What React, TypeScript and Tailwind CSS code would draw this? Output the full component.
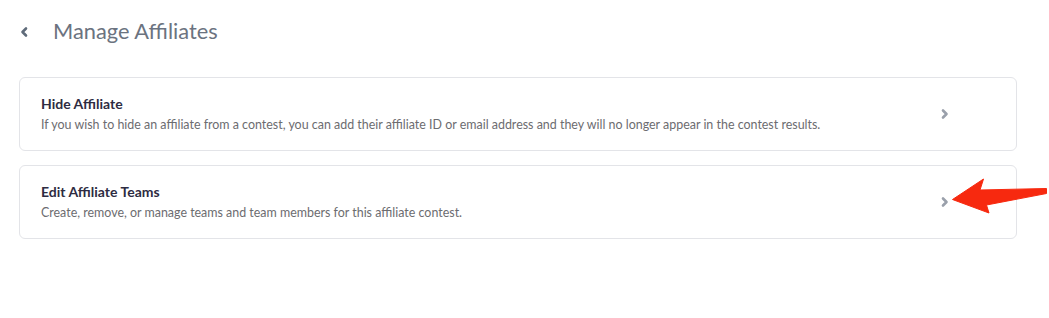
import React from "react";

const cards = [
  {
    title: "Hide Affiliate",
    text: "If you wish to hide an affiliate from a contest, you can add their affiliate ID or email address and they will no longer appear in the contest results.",
  },
  {
    title: "Edit Affiliate Teams",
    text: "Create, remove, or manage teams and team members for this affiliate contest.",
  },
];

function Chevron({ dir }: { dir: "left" | "right" }) {
  return (
    <svg width="10" height="12" viewBox="0 0 10 12" fill="none">
      <path
        d={dir === "left" ? "M7 2.5 L3.5 6 L7 9.5" : "M3 2.5 L6.5 6 L3 9.5"}
        stroke="currentColor"
        strokeWidth="2.6"
        strokeLinecap="round"
        strokeLinejoin="round"
      />
    </svg>
  );
}

export default function App() {
  return (
    <div className="relative min-h-[318px] w-[1049px] bg-white pl-[19px] pr-[32px] pt-[16px] font-['Lato','Noto_Sans',sans-serif]">
      <div className="flex h-[30px] items-center">
        <span className="flex w-[34px] pt-[2px] text-[#5f6b7a]">
          <Chevron dir="left" />
        </span>
        <h1 className="text-[21.8px] leading-none text-[#6b7380]">Manage Affiliates</h1>
      </div>
      <div className="mt-[31px] flex flex-col gap-[14px]">
        {cards.map((card) => (
          <div
            key={card.title}
            className="flex h-[74px] items-center justify-between rounded-[6px] border border-[#e3e4e8] pl-[21px] pr-[66px]"
          >
            <div>
              <p className="text-[14px] font-bold leading-[18px] text-[#2e2c42]">{card.title}</p>
              <p className="mt-[4px] text-[12.45px] leading-[16px] text-[#6c6c70]">{card.text}</p>
            </div>
            <span className="text-[#9aa0ab]">
              <Chevron dir="right" />
            </span>
          </div>
        ))}
      </div>
      <svg className="absolute left-0 top-0" width="1049" height="318" viewBox="0 0 1049 318">
        <path
          d="M952.5 199.5 L983.5 179 L980 190 L1046.5 188.5 L1046.5 193.5 L986.5 205 L989 213 Z"
          fill="#f7290f"
          stroke="#f7290f"
          strokeWidth="1"
          strokeLinejoin="round"
        />
      </svg>
    </div>
  );
}
